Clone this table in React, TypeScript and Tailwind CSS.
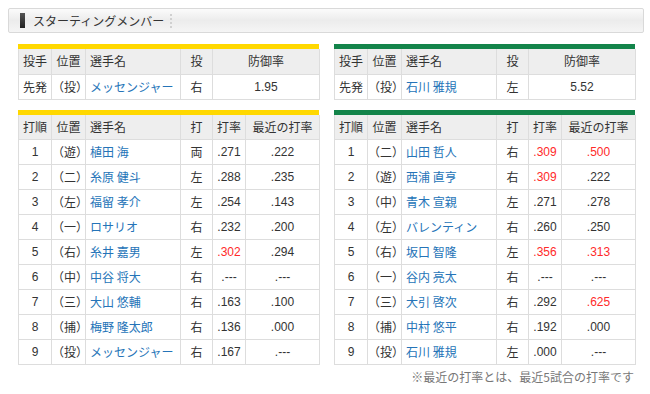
import React from "react";

type Batter = { order: number; pos: string; name: string; hand: string; avg: string; recent: string; avgRed?: boolean; recentRed?: boolean };

const tigers: Batter[] = [
  { order: 1, pos: "遊", name: "植田 海", hand: "両", avg: ".271", recent: ".222" },
  { order: 2, pos: "二", name: "糸原 健斗", hand: "左", avg: ".288", recent: ".235" },
  { order: 3, pos: "左", name: "福留 孝介", hand: "左", avg: ".254", recent: ".143" },
  { order: 4, pos: "一", name: "ロサリオ", hand: "右", avg: ".232", recent: ".200" },
  { order: 5, pos: "右", name: "糸井 嘉男", hand: "左", avg: ".302", recent: ".294", avgRed: true },
  { order: 6, pos: "中", name: "中谷 将大", hand: "右", avg: ".---", recent: ".---" },
  { order: 7, pos: "三", name: "大山 悠輔", hand: "右", avg: ".163", recent: ".100" },
  { order: 8, pos: "捕", name: "梅野 隆太郎", hand: "右", avg: ".136", recent: ".000" },
  { order: 9, pos: "投", name: "メッセンジャー", hand: "右", avg: ".167", recent: ".---" },
];

const swallows: Batter[] = [
  { order: 1, pos: "二", name: "山田 哲人", hand: "右", avg: ".309", recent: ".500", avgRed: true, recentRed: true },
  { order: 2, pos: "遊", name: "西浦 直亨", hand: "右", avg: ".309", recent: ".222", avgRed: true },
  { order: 3, pos: "中", name: "青木 宣親", hand: "左", avg: ".271", recent: ".278" },
  { order: 4, pos: "左", name: "バレンティン", hand: "右", avg: ".260", recent: ".250" },
  { order: 5, pos: "右", name: "坂口 智隆", hand: "左", avg: ".356", recent: ".313", avgRed: true, recentRed: true },
  { order: 6, pos: "一", name: "谷内 亮太", hand: "右", avg: ".---", recent: ".---" },
  { order: 7, pos: "三", name: "大引 啓次", hand: "右", avg: ".292", recent: ".625", recentRed: true },
  { order: 8, pos: "捕", name: "中村 悠平", hand: "右", avg: ".192", recent: ".000" },
  { order: 9, pos: "投", name: "石川 雅規", hand: "左", avg: ".000", recent: ".---" },
];

const th = "border border-[#dddddd] bg-[#eeeeee] font-normal h-[25px] p-0 whitespace-nowrap";
const td = "border border-[#dddddd] bg-white h-[25px] p-0 whitespace-nowrap";
const num = "text-center text-[12px] font-['Liberation_Sans',sans-serif]";

const PitcherTable = ({ bar, name, hand, era }: { bar: string; name: string; hand: string; era: string }) => (
  <div className="w-[301px]">
    <div className={`h-[5px] ${bar}`} />
    <table className="w-[301px] table-fixed border-collapse">
      <colgroup>
        <col className="w-[33px]" />
        <col className="w-[34px]" />
        <col className="w-[95px]" />
        <col className="w-[32px]" />
        <col className="w-[107px]" />
      </colgroup>
      <thead>
        <tr>
          <th className={`${th} border-t-0 text-center`}>投手</th>
          <th className={`${th} border-t-0 text-center`}>位置</th>
          <th className={`${th} border-t-0 text-left pl-[4px]`}>選手名</th>
          <th className={`${th} border-t-0 text-center`}>投</th>
          <th className={`${th} border-t-0 text-center`}>防御率</th>
        </tr>
      </thead>
      <tbody>
        <tr>
          <td className={`${td} text-center`}>先発</td>
          <td className={`${td} text-center`}>（投）</td>
          <td className={`${td} pl-[4px] text-[#2574b8]`}>{name}</td>
          <td className={`${td} text-center`}>{hand}</td>
          <td className={`${td} ${num}`}>{era}</td>
        </tr>
      </tbody>
    </table>
  </div>
);

const BatterTable = ({ bar, rows }: { bar: string; rows: Batter[] }) => (
  <div className="w-[301px]">
    <div className={`h-[5px] ${bar}`} />
    <table className="w-[301px] table-fixed border-collapse">
      <colgroup>
        <col className="w-[33px]" />
        <col className="w-[34px]" />
        <col className="w-[95px]" />
        <col className="w-[32px]" />
        <col className="w-[33px]" />
        <col className="w-[74px]" />
      </colgroup>
      <thead>
        <tr>
          <th className={`${th} border-t-0 text-center`}>打順</th>
          <th className={`${th} border-t-0 text-center`}>位置</th>
          <th className={`${th} border-t-0 text-left pl-[4px]`}>選手名</th>
          <th className={`${th} border-t-0 text-center`}>打</th>
          <th className={`${th} border-t-0 text-center`}>打率</th>
          <th className={`${th} border-t-0 text-center`}>最近の打率</th>
        </tr>
      </thead>
      <tbody>
        {rows.map((r) => (
          <tr key={r.order}>
            <td className={`${td} ${num}`}>{r.order}</td>
            <td className={`${td} text-center`}>（{r.pos}）</td>
            <td className={`${td} pl-[4px] text-[#2574b8]`}>{r.name}</td>
            <td className={`${td} text-center`}>{r.hand}</td>
            <td className={`${td} ${num} ${r.avgRed ? "text-[#ff2a2a]" : ""}`}>{r.avg}</td>
            <td className={`${td} ${num} ${r.recentRed ? "text-[#ff2a2a]" : ""}`}>{r.recent}</td>
          </tr>
        ))}
      </tbody>
    </table>
  </div>
);

export default function App() {
  return (
    <div className="w-[650px] h-[394px] bg-white pt-[8px] pl-[8px] text-[12px] text-[#333333] font-['Noto_Sans_CJK_JP',sans-serif]">
      <div className="w-[636px] h-[25px] flex items-center border border-[#d9d9d9] rounded-[2px] bg-gradient-to-b from-[#fbfbfb] via-[#ececec] to-[#f5f5f5]">
        <div className="ml-[11px] w-[5px] h-[15px] bg-gradient-to-b from-[#555555] to-[#222222]" />
        <span className="ml-[8px] text-[12px] text-[#333333]">スターティングメンバー</span>
        <div className="ml-[6px] h-[14px] border-l-2 border-dotted border-[#d0d0d0]" />
      </div>

      <div className="ml-[10px] mt-[11px] flex gap-[15px]">
        <div className="flex flex-col gap-[10px]">
          <PitcherTable bar="bg-[#ffd800]" name="メッセンジャー" hand="右" era="1.95" />
          <BatterTable bar="bg-[#ffd800]" rows={tigers} />
        </div>
        <div className="flex flex-col gap-[10px]">
          <PitcherTable bar="bg-[#13844a]" name="石川 雅規" hand="左" era="5.52" />
          <BatterTable bar="bg-[#13844a]" rows={swallows} />
          <div className="-mt-[7px] text-right text-[12px] text-[#777777] pr-[1px]">※最近の打率とは、最近5試合の打率です</div>
        </div>
      </div>
    </div>
  );
}
